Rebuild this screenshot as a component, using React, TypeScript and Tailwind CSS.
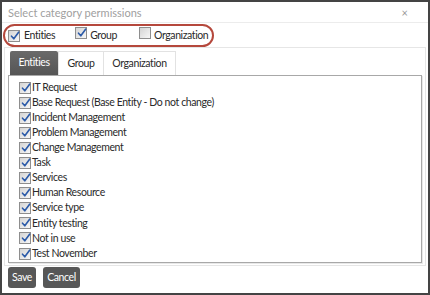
import React from "react";

const Check = () => (
  <svg width="10" height="10" viewBox="0 0 10 10" className="absolute left-[1px] top-[0px]">
    <path d="M1.5 5.2 L3.8 7.8 L8.6 1.2" fill="none" stroke="#2b5aa8" strokeWidth="1.6" strokeLinecap="round" strokeLinejoin="round" />
  </svg>
);

const Box = ({ checked }: { checked: boolean }) => (
  <span className="relative inline-block w-[12px] h-[12px] shrink-0 border border-[#8e8e8e] bg-gradient-to-br from-[#d4d4d4] to-[#f7f7f7]">
    {checked && <Check />}
  </span>
);

const items = [
  "IT Request",
  "Base Request (Base Entity - Do not change)",
  "Incident Management",
  "Problem Management",
  "Change Management",
  "Task",
  "Services",
  "Human Resource",
  "Service type",
  "Entity testing",
  "Not in use",
  "Test November",
];

export default function App() {
  return (
    <div
      className="w-[430px] h-[295px] border-2 border-[#444] bg-white flex flex-col overflow-hidden"
      style={{ fontFamily: "Lato, 'Noto Sans', sans-serif" }}
    >
      <div className="h-[21px] shrink-0 flex items-center justify-between pl-[6px] pr-[20px] pt-[3px] border-b border-[#ececec]">
        <span className="text-[11px] text-[#a0a0a0]">Select category permissions</span>
        <span className="text-[11px] text-[#999]">×</span>
      </div>
      <div className="h-[24px] shrink-0 flex items-center pl-[1px] pt-[1px]">
        <div className="flex items-center h-[23px] w-[211px] rounded-full border-2 border-[#b5483c] pl-[3px] text-[10.5px] tracking-[-0.4px] text-[#2a2a2a]">
          <Box checked />
          <span className="ml-[4px]">Entities</span>
          <span className="ml-[20px]"><Box checked /></span>
          <span className="ml-[3px]">Group</span>
          <span className="ml-[22px]"><Box checked={false} /></span>
          <span className="ml-[3px]">Organization</span>
        </div>
      </div>
      <div className="mx-[2px] h-[219px] shrink-0 border border-[#e6e6e6] pt-[3px] px-[3px] pb-[2px] flex flex-col">
        <div className="flex h-[24px] shrink-0 pl-[2px] text-[10.5px] tracking-[-0.4px]">
          <div className="w-[48px] flex items-center justify-center bg-gradient-to-b from-[#6a6a6a] to-[#555] text-white rounded-t-[2px]">Entities</div>
          <div className="w-[46px] flex items-center justify-center border border-b-0 border-[#e2e2e2] text-[#2a2a2a]">Group</div>
          <div className="w-[72px] flex items-center justify-center border border-b-0 border-l-0 border-[#e2e2e2] text-[#2a2a2a]">Organization</div>
        </div>
        <div className="flex-1 border border-[#a8a8a8] shadow-[1px_1px_0_#e8e8e8] pl-[10px] pt-[4px] flex flex-col text-[10.5px] tracking-[-0.4px] text-[#2a2a2a]">
          {items.map((t) => (
            <div key={t} className="flex items-center h-[15.1px] shrink-0">
              <Box checked />
              <span className="ml-[1px]">{t}</span>
            </div>
          ))}
        </div>
      </div>
      <div className="flex gap-[7px] pl-[6px] pt-[1px]">
        <button className="h-[21px] w-[28px] rounded-[3px] bg-[#575757] text-white text-[10.5px] tracking-[-0.4px]">Save</button>
        <button className="h-[21px] w-[37px] rounded-[3px] bg-[#575757] text-white text-[10.5px] tracking-[-0.4px]">Cancel</button>
      </div>
    </div>
  );
}
